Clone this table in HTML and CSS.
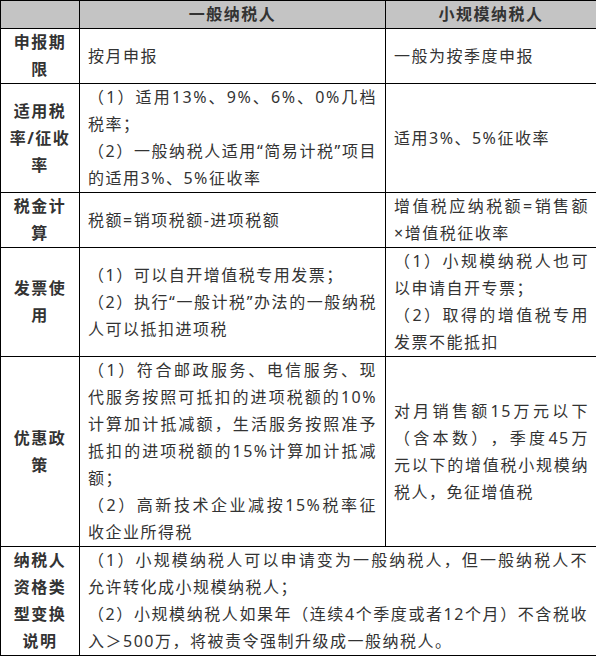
FILE: index.html
```html
<!DOCTYPE html>
<html lang="zh">
<head>
<meta charset="utf-8">
<link rel="stylesheet" href="styles.css">
</head>
<body>
<table class="tax">
  <colgroup>
    <col class="c1">
    <col class="c2">
    <col class="c3">
  </colgroup>
  <thead>
    <tr class="head">
      <th></th>
      <th>一般纳税人</th>
      <th>小规模纳税人</th>
    </tr>
  </thead>
  <tbody>
    <tr>
      <th class="label">申报期限</th>
      <td>按月申报</td>
      <td class="right">一般为按季度申报</td>
    </tr>
    <tr>
      <th class="label">适用税率/征收率</th>
      <td>（1）适用13%、9%、6%、0%几档税率；<br>（2）一般纳税人适用“简易计税”项目的适用3%、5%征收率</td>
      <td class="right">适用3%、5%征收率</td>
    </tr>
    <tr>
      <th class="label">税金计算</th>
      <td>税额=销项税额-进项税额</td>
      <td class="right">增值税应纳税额=销售额×增值税征收率</td>
    </tr>
    <tr>
      <th class="label">发票使用</th>
      <td>（1）可以自开增值税专用发票；<br>（2）执行“一般计税”办法的一般纳税人可以抵扣进项税</td>
      <td class="right">（1）小规模纳税人也可以申请自开专票；<br>（2）取得的增值税专用发票不能抵扣</td>
    </tr>
    <tr>
      <th class="label">优惠政策</th>
      <td>（1）符合邮政服务、电信服务、现代服务按照可抵扣的进项税额的10%计算加计抵减额，生活服务按照准予抵扣的进项税额的15%计算加计抵减额；<br>（2）高新技术企业减按15%税率征收企业所得税</td>
      <td class="right">对月销售额15万元以下（含本数），季度45万元以下的增值税小规模纳税人，免征增值税</td>
    </tr>
    <tr>
      <th class="label">纳税人资格类型变换说明</th>
      <td colspan="2">（1）小规模纳税人可以申请变为一般纳税人，但一般纳税人不允许转化成小规模纳税人；<br>（2）小规模纳税人如果年（连续4个季度或者12个月）不含税收入＞500万，将被责令强制升级成一般纳税人。</td>
    </tr>
  </tbody>
</table>
</body>
</html>
```
FILE: styles.css
```css
html, body {
  margin: 0;
  padding: 0;
  background: #ffffff;
}

.tax {
  border-collapse: collapse;
  table-layout: fixed;
  width: 596px;
  font-family: "Noto Sans", "Noto Sans CJK SC", sans-serif;
  font-size: 16px;
  letter-spacing: 1.5px;
  line-height: 27px;
  color: #333333;
  text-spacing-trim: space-all;
}

.c1 { width: 79px; }
.c2 { width: 306px; }
.c3 { width: 211px; }

.tax th,
.tax td {
  border: 1px solid #000000;
  padding: 0 8px;
  vertical-align: middle;
  text-align: justify;
  font-weight: normal;
}

.head th {
  background: #c4c4c4;
  font-weight: bold;
  text-align: center;
  line-height: 27px;
}

.tax th.label {
  font-weight: bold;
  text-align: center;
}

.tax td.right {
  padding: 0 7px 0 8px;
}
```
